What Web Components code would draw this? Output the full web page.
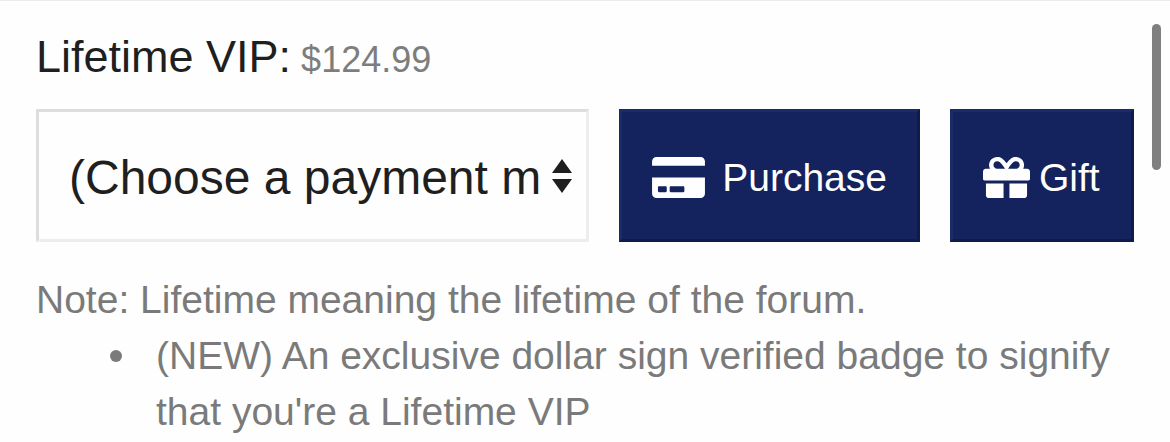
<!DOCTYPE html>
<html lang="en">
<head>
<meta charset="utf-8">
<meta name="viewport" content="width=device-width, initial-scale=1">
<title>Lifetime VIP</title>
<style>
body { margin: 0; background: #fefefe; font-family: "Liberation Sans", Arial, Helvetica, sans-serif; color: #1f1f1f; }
html { overflow: hidden; }
</style>
</head>
<body>
<upgrade-panel>
  <upgrade-title slot="title" price="$124.99">Lifetime VIP:</upgrade-title>
  <payment-picker></payment-picker>
  <action-button icon="card">Purchase</action-button>
  <action-button icon="gift">Gift</action-button>
  <upgrade-note slot="note">Note: Lifetime meaning the lifetime of the forum.</upgrade-note>
</upgrade-panel>
<script>
class Base extends HTMLElement {
  constructor() {
    super();
    this.attachShadow({ mode: "open" }).innerHTML = this.render();
  }
}

customElements.define("upgrade-panel", class extends Base {
  render() {
    return `<style>
      :host { display: block; position: relative; border-top: 1px solid #ebebeb; padding: 28px 36px 0; }
      .row { display: flex; gap: 30px; margin: 24px 0 30px; }
      .thumb { position: absolute; top: 23px; right: 9px; width: 9px; height: 146px; border-radius: 5px; background: #808080; }
    </style>
    <slot name="title"></slot>
    <div class="row"><slot></slot></div>
    <slot name="note"></slot>
    <div class="thumb"></div>`;
  }
});

customElements.define("upgrade-title", class extends Base {
  render() {
    return `<style>
      :host { display: block; }
      h3 { display: flex; align-items: baseline; gap: 10px; margin: 0; font-size: 45px; line-height: 56px; font-weight: 400; }
      small { font-size: 36px; color: #7d7d7d; line-height: 40px; }
    </style>
    <h3><span><slot></slot></span> <small>${this.getAttribute("price")}</small></h3>`;
  }
});

customElements.define("payment-picker", class extends Base {
  render() {
    return `<style>
      :host { display: block; position: relative; flex: 1; min-width: 0; }
      select { appearance: none; display: block; box-sizing: border-box; width: 100%; height: 133px; margin: 0;
        padding: 4px 46px 0 30px; border: 3px solid; border-color: #ddd #ededed #ededed #ddd; border-radius: 0;
        background: #fefefe; color: #1f1f1f; font-family: inherit; font-size: 48px; text-overflow: clip; }
      svg { position: absolute; right: 17px; top: 50px; width: 20px; height: 34px; fill: #1f1f1f; pointer-events: none; }
    </style>
    <select aria-label="Payment method"><option>(Choose a payment method)</option></select>
    <svg viewBox="0 0 20 34" aria-hidden="true"><path d="M10 0 20 14H0zM0 20h20L10 34z"/></svg>`;
  }
});

const ICONS = {
  card: [576, 53, 17, "M0 432c0 26.5 21.5 48 48 48h480c26.5 0 48-21.5 48-48V256H0v176zm192-68c0-6.6 5.4-12 12-12h136c6.6 0 12 5.4 12 12v40c0 6.6-5.4 12-12 12H204c-6.6 0-12-5.4-12-12v-40zm-128 0c0-6.6 5.4-12 12-12h72c6.6 0 12 5.4 12 12v40c0 6.6-5.4 12-12 12H76c-6.6 0-12-5.4-12-12v-40zM576 80v48H0V80c0-26.5 21.5-48 48-48h480c26.5 0 48 21.5 48 48z"],
  gift: [512, 47, 9, "M32 448c0 17.7 14.3 32 32 32h160V320H32v128zm256 32h160c17.7 0 32-14.3 32-32V320H288v160zm192-320h-42.1c6.2-12.1 10.1-25.5 10.1-40 0-48.5-39.5-88-88-88-41.6 0-68.5 21.3-103 68.3-34.5-47-61.4-68.3-103-68.3-48.5 0-88 39.5-88 88 0 14.5 3.8 27.9 10.1 40H32c-17.7 0-32 14.3-32 32v80c0 8.8 7.2 16 16 16h480c8.8 0 16-7.2 16-16v-80c0-17.7-14.3-32-32-32zm-326.1 0c-22.1 0-40-17.9-40-40s17.9-40 40-40c19.9 0 34.6 3.3 86.1 80h-86.1zm206.1 0h-86.1c51.4-76.5 65.7-80 86.1-80 22.1 0 40 17.9 40 40s-17.9 40-40 40z"]
};

customElements.define("action-button", class extends Base {
  render() {
    const [box, width, gap, path] = ICONS[this.getAttribute("icon")];
    return `<style>
      :host { display: block; flex: none; }
      button { display: flex; align-items: center; justify-content: flex-start; gap: ${gap}px; box-sizing: border-box; min-width: 184px; height: 133px; margin: 0;
        padding: 4px 30px 0; border: 3px solid; border-color: #1b2b68 #101b4c #101b4c #1b2b68; border-radius: 0;
        background: #14225d; color: #fefefe; font-family: inherit; font-size: 39px; line-height: 56px; white-space: nowrap; }
      svg { width: ${width}px; height: 47px; fill: currentColor; }
    </style>
    <button type="button"><svg viewBox="0 0 ${box} 512" aria-hidden="true"><path d="${path}"/></svg><span><slot></slot></span></button>`;
  }
});

customElements.define("upgrade-note", class extends Base {
  render() {
    return `<style>
      :host { display: block; font-size: 39px; line-height: 56px; color: #7a7a7a; }
      p, ul { margin: 0; }
      ul { padding: 0 0 0 120px; list-style: none; }
      li { position: relative; }
      li::before { content: ""; position: absolute; left: -46px; top: 22px; width: 12px; height: 12px; border-radius: 50%; background: #7a7a7a; }
    </style>
    <p><slot></slot></p>
    <ul><li>(NEW) An exclusive dollar sign verified badge to signify that you're a Lifetime VIP</li></ul>`;
  }
});
</script>
</body>
</html>
